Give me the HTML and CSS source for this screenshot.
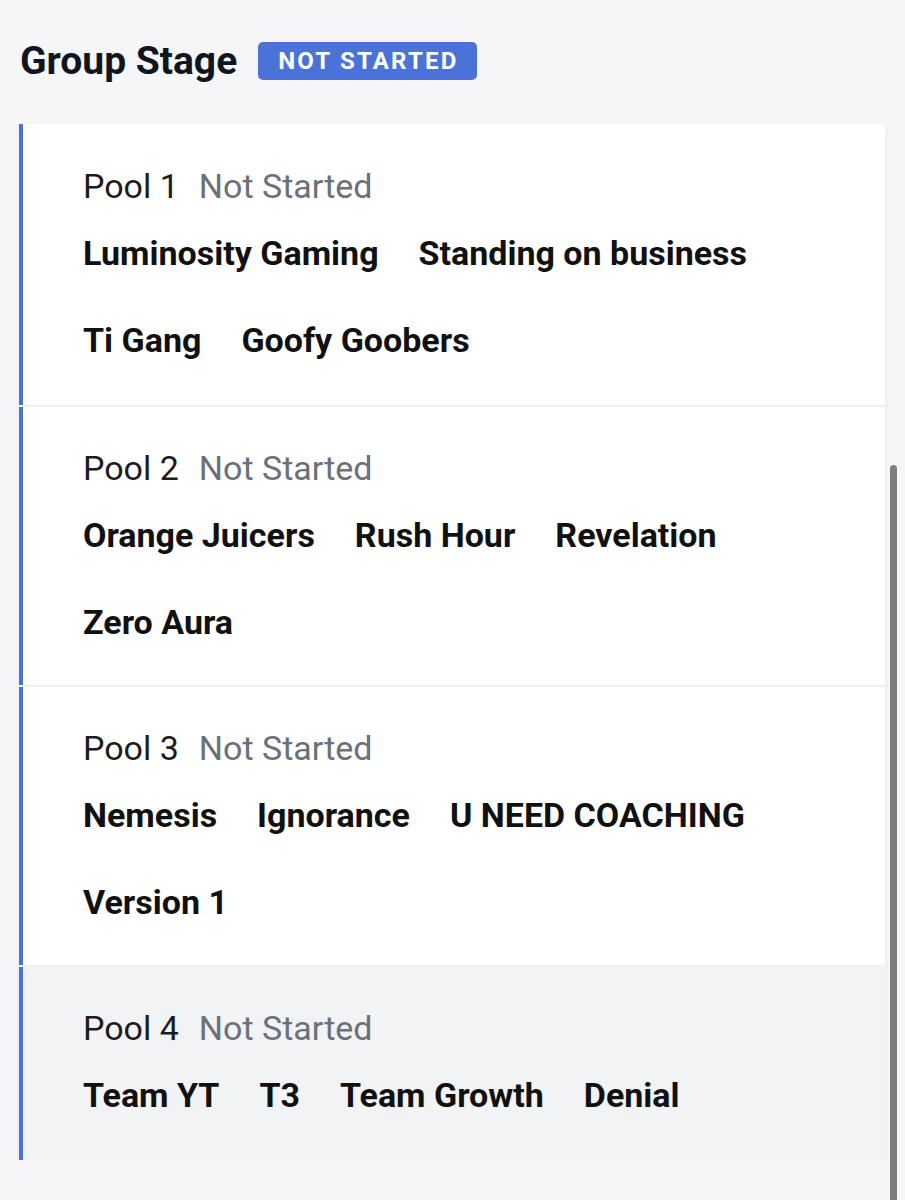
FILE: index.html
```html
<!DOCTYPE html>
<html lang="en">
<head>
<meta charset="utf-8">
<title>Group Stage</title>
<link rel="stylesheet" href="styles.css">
</head>
<body>
<div class="page">
  <header class="stage-header">
    <h1 class="stage-title">Group Stage</h1>
    <span class="badge">NOT STARTED</span>
  </header>
  <div class="pools">
    <section class="pool">
      <div class="pool-head"><span class="pool-name">Pool 1</span><span class="pool-status">Not Started</span></div>
      <div class="teams">
        <span class="team">Luminosity Gaming</span>
        <span class="team">Standing on business</span>
        <span class="team">Ti Gang</span>
        <span class="team">Goofy Goobers</span>
      </div>
    </section>
    <section class="pool">
      <div class="pool-head"><span class="pool-name">Pool 2</span><span class="pool-status">Not Started</span></div>
      <div class="teams">
        <span class="team">Orange Juicers</span>
        <span class="team">Rush Hour</span>
        <span class="team">Revelation</span>
        <span class="team">Zero Aura</span>
      </div>
    </section>
    <section class="pool">
      <div class="pool-head"><span class="pool-name">Pool 3</span><span class="pool-status">Not Started</span></div>
      <div class="teams">
        <span class="team">Nemesis</span>
        <span class="team">Ignorance</span>
        <span class="team">U NEED COACHING</span>
        <span class="team">Version 1</span>
      </div>
    </section>
    <section class="pool pool-active">
      <div class="pool-head"><span class="pool-name">Pool 4</span><span class="pool-status">Not Started</span></div>
      <div class="teams">
        <span class="team">Team YT</span>
        <span class="team">T3</span>
        <span class="team">Team Growth</span>
        <span class="team">Denial</span>
      </div>
    </section>
  </div>
</div>
<div class="scroll-thumb"></div>
</body>
</html>
```
FILE: styles.css
```css
html, body {
  margin: 0;
  padding: 0;
  background: #f6f6f8;
  font-family: Roboto, "Liberation Sans", sans-serif;
}

.page {
  padding: 37px 20px 0 19px;
}

.stage-header {
  display: flex;
  align-items: center;
  gap: 21px;
  padding-left: 1px;
}

.stage-title {
  margin: 0;
  font-size: 39px;
  line-height: 48px;
  font-weight: 700;
  color: #0f1521;
}

.badge {
  display: inline-block;
  background: #4a72d8;
  color: #ffffff;
  font-size: 24px;
  font-weight: 700;
  letter-spacing: 2.2px;
  line-height: 38px;
  padding: 0 19px 0 20px;
  border-radius: 5px;
}

.pools {
  margin-top: 39px;
  display: flex;
  flex-direction: column;
  gap: 2px;
  background: #f0f0f2;
  box-shadow: 0 3px 5px rgba(0, 0, 0, 0.07);
}

.pool {
  background: #ffffff;
  border-left: 4px solid #4a72d8;
  padding: 41px 20px 43px 60px;
}

.pool:first-child {
  padding-top: 42px;
  padding-bottom: 45px;
}

.pool:last-child {
  padding-bottom: 45px;
}

.pool-active {
  background: #f2f3f5;
}

.pool-head {
  display: flex;
  align-items: baseline;
  gap: 20px;
  font-size: 34px;
  line-height: 40px;
}

.pool-name {
  color: #1c1c1e;
}

.pool-status {
  color: #6b7079;
}

.teams {
  margin-top: 27px;
  display: flex;
  flex-wrap: wrap;
  column-gap: 40px;
  row-gap: 47px;
}

.team {
  font-size: 34px;
  line-height: 40px;
  font-weight: 700;
  color: #111111;
}

.scroll-thumb {
  position: fixed;
  top: 465px;
  right: 8px;
  width: 7px;
  height: 760px;
  border-radius: 4px;
  background: #7f7f7f;
}
```
